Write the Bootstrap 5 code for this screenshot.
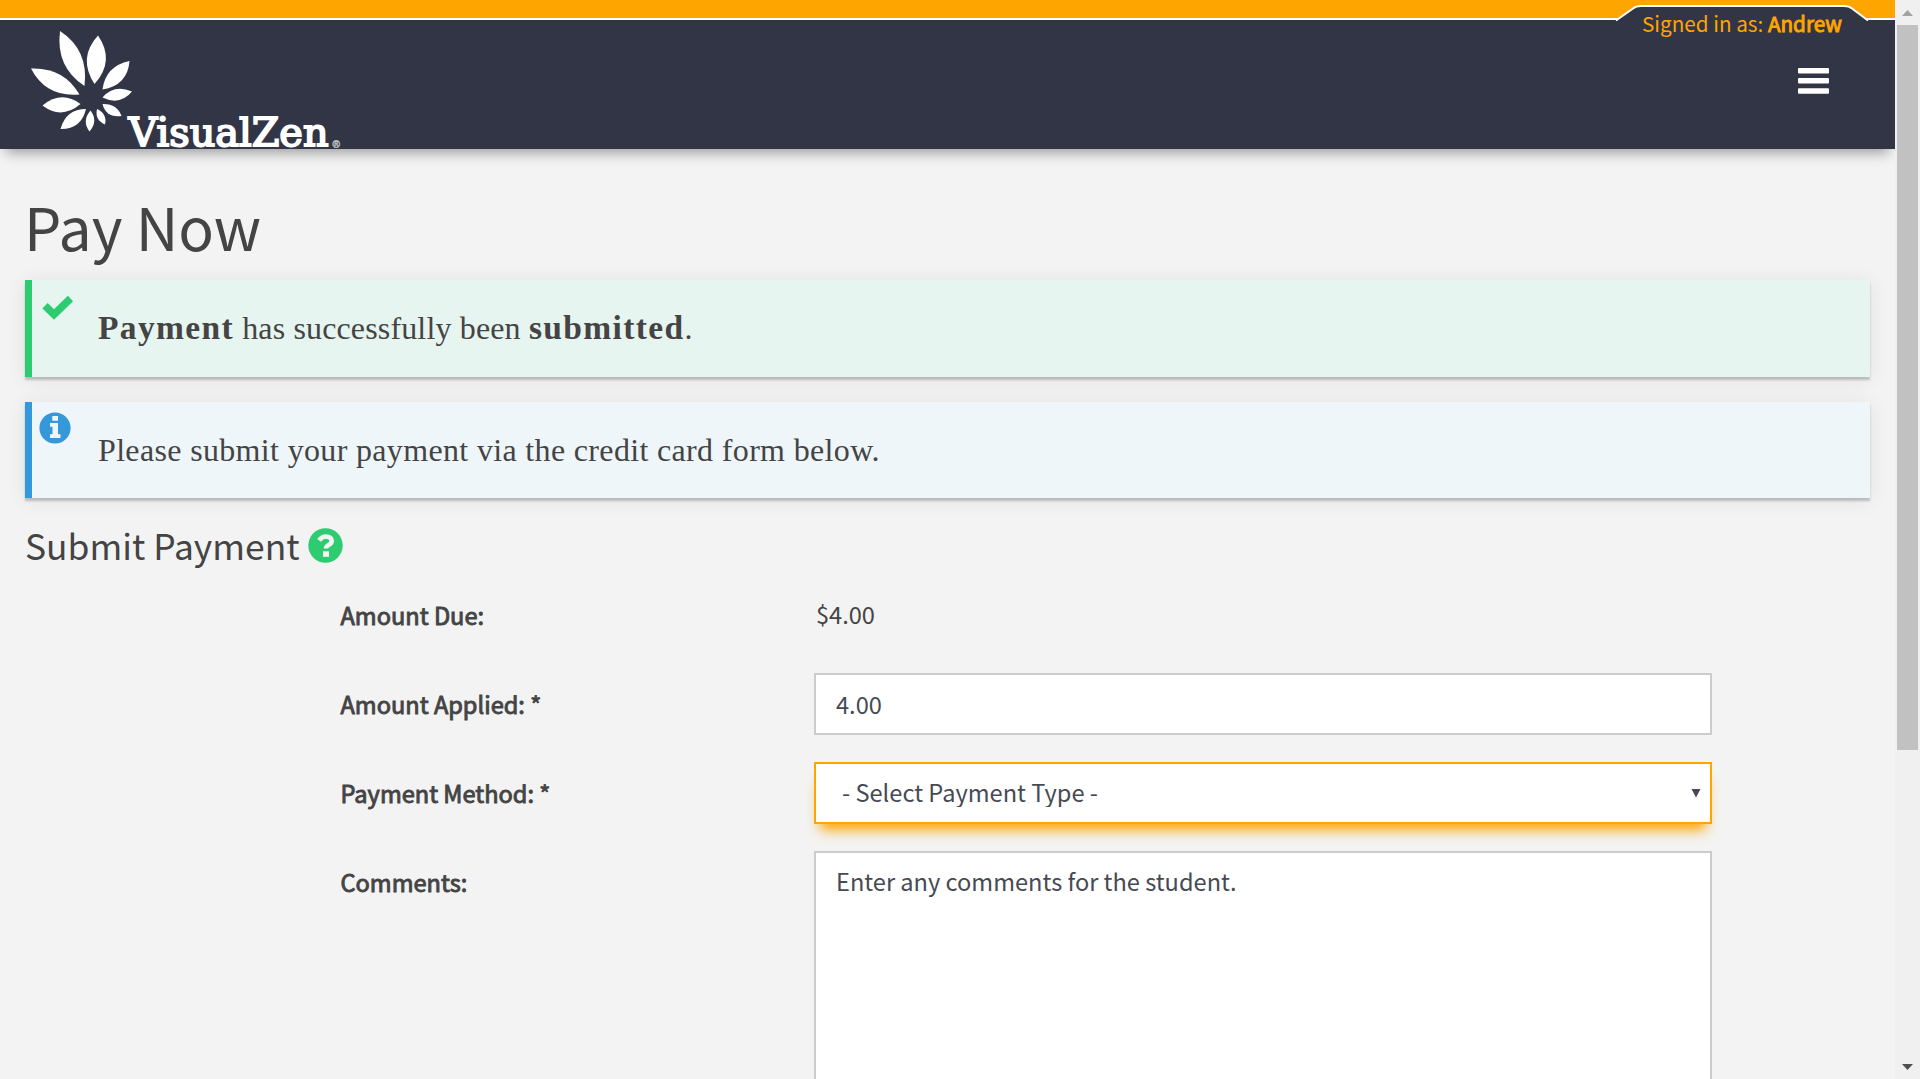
<!DOCTYPE html>
<html lang="en">
<head>
<meta charset="utf-8">
<meta name="viewport" content="width=device-width, initial-scale=1">
<title>Pay Now</title>
<link href="https://cdn.jsdelivr.net/npm/bootstrap@5.3.0/dist/css/bootstrap.min.css" rel="stylesheet">
<style>
body{background:#f3f3f3;color:#444;font-family:"Noto Sans CJK SC","Noto Sans",sans-serif;font-size:23.6px;line-height:30px}
.faux-bold{font-weight:400;-webkit-text-stroke:.9px currentColor}
.site-header{height:149px;background:#323545;border-top:18px solid #ffa500;box-shadow:0 10px 12px -6px rgba(0,0,0,.35)}
.header-line{height:2px;background:#fff}
.site-logo{left:0;top:-18px}
.user-tab{left:1612px;top:-18px}
.user-name{left:1642px;top:-10px;color:#ffa500;font-size:20.7px;line-height:30px}
.menu-toggle{padding:46px 66px 0 0}
.page-body{padding:42px 25px 0}
.page-title{font-size:59px;line-height:70px;margin:0 0 19px -1px;font-weight:400}
.notice{border-left:7px solid;box-shadow:0 3px 2px rgba(0,0,0,.2),0 2px 20px rgba(0,0,0,.08);font-family:"Liberation Serif",serif;font-size:32px;line-height:40px;padding:28px 0 0 66px}
.notice-ok{height:97px;background:#e6f5f0;border-color:#2ecc71;margin-bottom:25px}
.notice-info{height:96px;background:#eef6fa;border-color:#3498db}
.notice p{margin:0;color:#444}
.notice strong{font-size:33.5px;letter-spacing:1.35px;line-height:1}
.ok-text{letter-spacing:.15px}
.info-text{letter-spacing:.34px}
.notice svg{left:0;top:0}
.section-title{font-size:35.4px;line-height:46px;margin:24px 0 16px 0;font-weight:400}
.form-line{margin:0 158px 27px 315px;min-height:62px}
.form-line>label{width:474px;padding:16px 0 0 .5px;color:#444}
.due-value{padding:15px 0 0 2px}
.form-line .field-box{height:62px;border:2px solid #ccc;border-radius:0;padding:0 20px;font-size:23.6px;line-height:30px;color:#464a54;background:#fff;box-shadow:none}
.form-line .pay-method{border-color:#ffa500;padding:0 26px 2px;box-shadow:0 12px 12px -6px #ffa500}
.form-line textarea.field-box{height:300px;padding-top:13px;resize:none}
.method-arrow{right:11px;top:26px}
.scroll-track{width:25px;background:#f0f0f0;padding:8px 2px 0}
.scroll-thumb{height:725px;background:#c1c1c1}
</style>
<script src="https://cdn.jsdelivr.net/npm/bootstrap@5.3.0/dist/js/bootstrap.bundle.min.js"></script>
</head>
<body class="vh-100 overflow-hidden">
<div class="d-flex vh-100 overflow-hidden">
 <div class="flex-grow-1 overflow-hidden">
  <header class="site-header position-relative">
   <div class="header-line"></div>
   <a href="#" class="site-logo position-absolute" aria-label="VisualZen">
    <svg class="d-block" width="360" height="164" viewBox="0 0 360 164" fill="#fff">
     <path d="M60 31Q89 50 84.500 86Q55.500 67 60 31Z"/>
     <path d="M98 35.500Q115.500 61 94.500 84Q77.500 58 98 35.500Z"/>
     <path d="M129.500 61Q127.500 85.500 102.500 89.500Q105.500 66 129.500 61Z"/>
     <path d="M132 91.500Q120 106 102.500 97.500Q114 84 132 91.500Z"/>
     <path d="M102.500 104Q117 103.500 121.500 116Q106 118 102.500 104Z"/>
     <path d="M97 109Q107.500 114 105 124.500Q94.500 120 97 109Z"/>
     <path d="M90.500 110.500Q98.500 121 89.500 131.500Q81.500 121 90.500 110.500Z"/>
     <path d="M86 109Q81 129.500 60.500 129Q66 109 86 109Z"/>
     <path d="M80.500 104Q61.500 120 42.500 105.500Q61.500 90 80.500 104Z"/>
     <path d="M79.500 94.500Q46 97.500 31 68.500Q63.500 67 79.500 94.500Z"/>
     <text x="128.500" y="146" font-family="DejaVu Serif,serif" font-size="39.500" stroke="#fff" stroke-width="1.900" textLength="200" lengthAdjust="spacingAndGlyphs">VisualZen</text>
     <text x="332.500" y="148" font-family="Liberation Sans,sans-serif" font-size="10" stroke="#fff" stroke-width=".5" opacity=".65">®</text>
    </svg>
   </a>
   <svg class="user-tab position-absolute" width="262" height="22" viewBox="0 0 262 22">
    <path d="M5 22V20L21 8.500Q24 6 29 6H232Q238 6 241 9L256 20V22Z" fill="#323545"/>
    <path d="M4 20.500L21 8.500Q24 6 29 6H232Q237 6 240 8.500L256 20.500" fill="none" stroke="#fff" stroke-width="2"/>
   </svg>
   <div class="user-name position-absolute text-nowrap">Signed in as: <b class="faux-bold">Andrew</b></div>
   <div class="menu-toggle d-flex justify-content-end">
    <svg width="31" height="28" viewBox="0 0 31 28" fill="#fff"><rect y="2" width="31" height="5.500" rx="1"/><rect y="12" width="31" height="5.500" rx="1"/><rect y="22.200" width="31" height="5.500" rx="1"/></svg>
   </div>
  </header>
  <main class="page-body">
   <h1 class="page-title">Pay Now</h1>
   <div class="notice notice-ok position-relative">
    <svg class="position-absolute" width="60" height="60" viewBox="0 0 60 60"><path d="M13 25.800L22 34.500L38.500 18.500" fill="none" stroke="#2ecc71" stroke-width="7.500"/></svg>
    <p class="ok-text"><strong>Payment</strong> <span>has successfully been</span> <strong>submitted</strong>.</p>
   </div>
   <div class="notice notice-info position-relative">
    <svg class="position-absolute" width="60" height="60" viewBox="0 0 60 60"><circle cx="23" cy="26" r="15.600" fill="#3498db"/><path d="M20.300 14H26V18.700H20.300ZM18 21H26V32.300H28.500V36H18V32.300H20.500V24.800H18Z" fill="#eef6fa"/></svg>
    <p class="info-text">Please submit your payment via the credit card form below.</p>
   </div>
   <h2 class="section-title d-flex align-items-start"><span class="section-label">Submit Payment</span>
    <svg class="ms-2" width="36" height="44" viewBox="0 0 36 44"><circle cx="17.500" cy="23.500" r="17.200" fill="#2ecc71"/><path d="M11.100 18.400Q13.700 14.500 17.900 14.500Q23.500 14.800 23.700 18.900Q23.700 21.300 20.600 23Q18 24.500 18 26.500" fill="none" stroke="#f3f3f3" stroke-width="4.600"/><rect x="15" y="29.300" width="6" height="5.500" fill="#f3f3f3"/></svg>
   </h2>
   <form>
    <div class="form-line d-flex"><label class="faux-bold">Amount Due:</label><div class="due-value">$4.00</div></div>
    <div class="form-line d-flex"><label class="faux-bold" for="amt">Amount Applied: *</label><div class="flex-grow-1"><input id="amt" class="form-control field-box" value="4.00"></div></div>
    <div class="form-line d-flex"><label class="faux-bold" for="method">Payment Method: *</label><div class="flex-grow-1 position-relative"><select id="method" class="form-select field-box pay-method"><option>- Select Payment Type -</option></select><svg class="method-arrow position-absolute" width="10" height="10"><path d="M.5 1H9.500L5 9.500Z" fill="#464a54"/></svg></div></div>
    <div class="form-line d-flex"><label class="faux-bold" for="note">Comments:</label><div class="flex-grow-1"><textarea id="note" class="form-control field-box">Enter any comments for the student.</textarea></div></div>
   </form>
  </main>
 </div>
 <div class="scroll-track flex-shrink-0 d-flex flex-column">
  <svg class="d-block" width="21" height="17"><path d="M5 8L10.500 2L16 8Z" fill="#a3a3a3"/></svg>
  <div class="scroll-thumb"></div>
  <svg class="d-block mt-auto" width="21" height="18"><path d="M5 3H16L10.500 9Z" fill="#505050"/></svg>
 </div>
</div>
</body>
</html>
